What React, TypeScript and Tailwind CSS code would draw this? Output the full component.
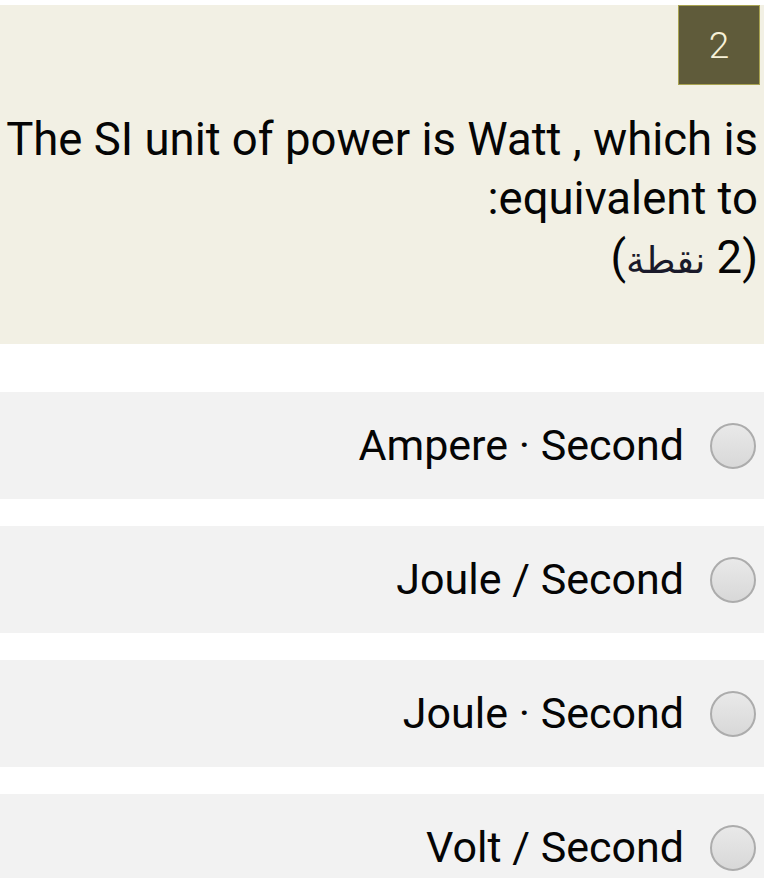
import React from "react";

const options = ["Ampere · Second", "Joule / Second", "Joule · Second", "Volt / Second"];

function Radio() {
  return (
    <span className="block w-[46px] h-[46px] rounded-full border-2 border-[#acacac] bg-gradient-to-b from-[#e9e9e9] to-[#d8d8d8] shrink-0" />
  );
}

export default function App() {
  return (
    <div className="w-[764px] h-[878px] overflow-hidden bg-white pt-[5px]" style={{ fontFamily: "Roboto, 'Noto Sans', 'DejaVu Sans', sans-serif" }}>
      <div className="bg-[#f2f0e4] h-[339px] flex flex-col" dir="rtl">
        <div className="flex justify-start pr-[4px]">
          <div className="w-[82px] h-[80px] bg-[#5f5b3a] border border-[#a9a350] flex items-center justify-center text-[#f6f1d8] text-[37px] font-light leading-none">
            2
          </div>
        </div>
        <div className="pr-[6px] pl-0 pt-[25px] text-[45.5px] leading-[59px] text-[#050505] text-right">
          <p>The SI unit of power is Watt , which is equivalent to:</p>
          <p>(2 <span className="text-[37px] text-[#1a1a2a]">نقطة</span>)</p>
        </div>
      </div>
      <div className="pt-[48px] flex flex-col gap-[27px]">
        {options.map((o) => (
          <div key={o} className="h-[107px] bg-[#f2f2f2] flex items-center justify-end pr-[8px] gap-[26px]">
            <span className="text-[43px] text-[#050505] leading-none">{o}</span>
            <Radio />
          </div>
        ))}
      </div>
    </div>
  );
}
